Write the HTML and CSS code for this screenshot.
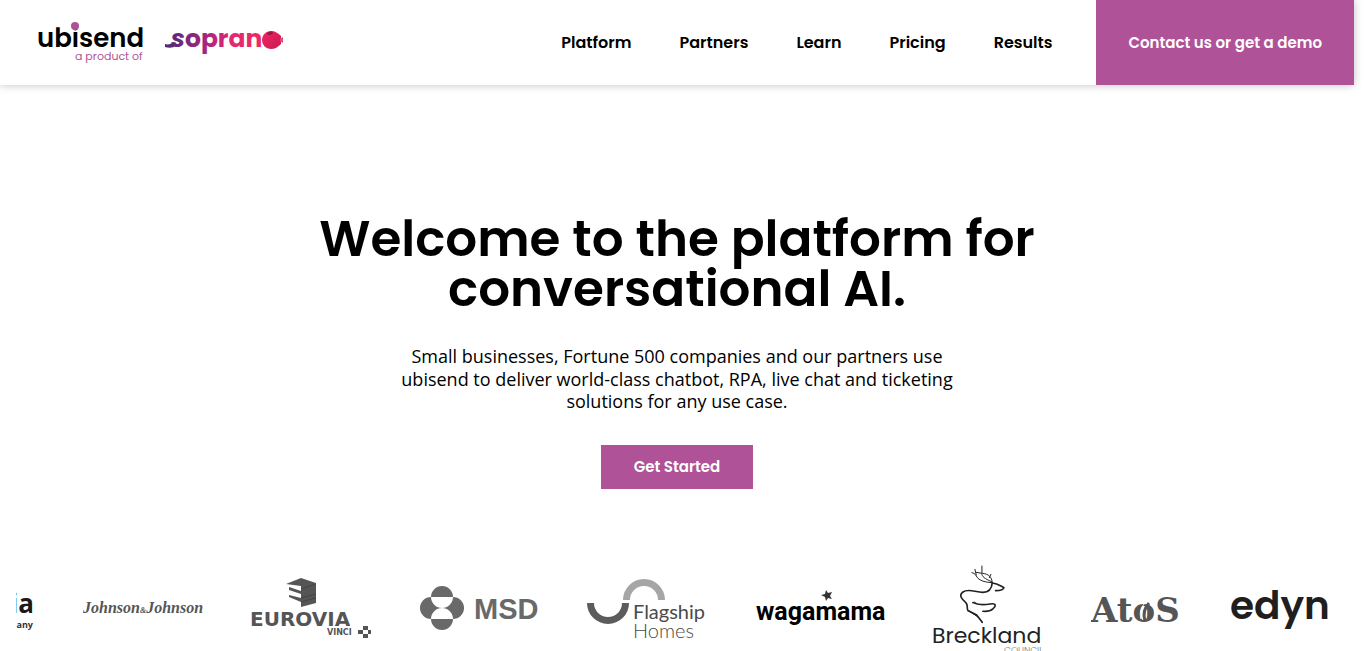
FILE: index.html
```html
<!DOCTYPE html>
<html lang="en">
<head>
<meta charset="UTF-8">
<meta name="viewport" content="width=device-width, initial-scale=1.0">
<title>ubisend</title>
<link rel="stylesheet" href="styles.css">
</head>
<body>

<header class="header">
    <a href="#" class="brand" aria-label="ubisend">
        <svg class="brand-logo" width="250" height="50" viewBox="0 0 250 50">
            <defs>
                <linearGradient id="sopranoFill" gradientUnits="userSpaceOnUse" x1="127" y1="0" x2="240" y2="0">
                    <stop offset="0" stop-color="#4b2a7b"/>
                    <stop offset=".35" stop-color="#a4247f"/>
                    <stop offset=".6" stop-color="#e62872"/>
                    <stop offset="1" stop-color="#ee2a5e"/>
                </linearGradient>
                <linearGradient id="ballFill" x1="0" y1="0" x2="1" y2="1">
                    <stop offset="0" stop-color="#f02563"/>
                    <stop offset="1" stop-color="#c91b50"/>
                </linearGradient>
            </defs>
            <text x="-1" y="29" class="logo-ubisend">ubisend</text>
            <circle cx="37" cy="8" r="4" fill="#b05297"/>
            <text x="37" y="42" class="logo-product">a product of</text>
            <!-- soprano -->
            <path d="M127 26c3 1 6 0 9-2v5c-3 1-6 1-9 0z" fill="url(#sopranoFill)"/>
            <text x="133" y="29" class="logo-soprano"><tspan class="slant">s</tspan>oprano</text>
            <path d="M224 22c0-5 4-9 9-9 4 0 7 2 10 5v8c-3 3-6 5-10 5-5 0-9-4-9-9z" fill="url(#ballFill)"/>
            <path d="M229 15c3-2 5-2 6 0-1 2-3 2-5 2z" fill="#9a1743"/>
            <path d="M242 21l3-2v6l-3-2z" fill="#d9507e"/>
        </svg>
    </a>
    <nav class="nav">
        <a href="#">Platform</a>
        <a href="#">Partners</a>
        <a href="#">Learn</a>
        <a href="#">Pricing</a>
        <a href="#">Results</a>
    </nav>
    <a href="#" class="contact">Contact us or get a demo</a>
</header>

<main>
    <section class="hero">
        <h1>Welcome to the platform for conversational AI.</h1>
        <p>Small businesses, Fortune 500 companies and our partners use ubisend to deliver world-class chatbot, RPA, live chat and ticketing solutions for any use case.</p>
        <a href="#" class="button">Get Started</a>
    </section>

    <section class="logos">
        <svg width="24" height="86" viewBox="0 0 24 86">
            <text x="23" y="48" class="logo-ia">ia</text>
            <text x="22" y="63" class="logo-any">any</text>
        </svg>

        <svg width="120" height="86" viewBox="0 0 120 86">
            <text x="0" y="48" class="logo-johnson">Johnson<tspan class="amp">&amp;</tspan>Johnson</text>
        </svg>

        <!-- Eurovia -->
        <svg width="120" height="86" viewBox="0 0 120 86">
            <g fill="#555">
                <path d="M35 19l15-6 15 5v20l-15 4v-5l-12-5v-2l12 3v-4l-12-4v-3l12 4v-5z"/>
                <path d="M50 24l15-5M50 33l15-4M50 37l15-4" stroke="#444" fill="none"/>
                <path d="M112 61h5v4h-5zM112 69h5v4h-5zM107 65h5v4h-5zM117 65h4v4h-4z"/>
            </g>
            <text x="-1" y="61" class="logo-eurovia">EUROVIA</text>
            <text x="76" y="70" class="logo-vinci">VINCI</text>
        </svg>

        <!-- MSD -->
        <svg width="120" height="86" viewBox="0 0 120 86">
            <g fill="#696969">
                <circle cx="12" cy="43" r="11"/>
                <circle cx="34" cy="43" r="11"/>
                <path d="M12 32a11 11 0 0 1 22 0zM12 54a11 11 0 0 0 22 0z"/>
                <path d="M12 32h22v22H12z"/>
            </g>
            <path d="M12 32a11 11 0 0 0 22 0zM12 54a11 11 0 0 1 22 0z" fill="#fff"/>
            <text x="55" y="54" class="logo-msd">MSD</text>
        </svg>

        <!-- Flagship Homes -->
        <svg width="120" height="86" viewBox="0 0 120 86">
            <path d="M3.500 38a17.500 17.500 0 0 0 35 0" fill="none" stroke="#5c5c5c" stroke-width="7"/>
            <path d="M39.500 35a17.500 17.500 0 0 1 35 0" fill="none" stroke="#a6a6a6" stroke-width="7"/>
            <text x="46" y="54" class="logo-flagship">Flagship</text>
            <text x="46" y="73" class="logo-homes">Homes</text>
        </svg>

        <!-- wagamama -->
        <svg width="130" height="86" viewBox="0 0 130 86">
            <path d="M71 25l2 3 4-1-2 4 2 3-4-1-2 3-1-4-4-2 4-1z" fill="#333"/>
            <text x="1" y="55" class="logo-wagamama">wagamama</text>
        </svg>

        <!-- Breckland Council -->
        <svg width="110" height="86" viewBox="0 0 110 86">
            <g transform="translate(-23 -5) scale(.333)" fill="none" stroke="#222" stroke-linecap="round">
                <path d="M257 92c14 0 24-3 25-9-10-5-18-13-35-14" stroke-width="5"/>
                <path d="M247 69c-2 22-12 28-28 28-25-1-45-12-60-1-14 10-3 22 8 31 9 8 2 16 7 25l26 13 17 22" stroke-width="5"/>
                <path d="M176 152c18 14 35 20 40 35" stroke-width="3"/>
                <path d="M189 128c17 9 35 7 52 4 20-3 17 8 8 15-8 7-19 8-30 7" stroke-width="5"/>
                <path d="M189 128c10-5 5 2 15 4" stroke-width="3"/>
                <path d="M247 68c-20-1-40-5-48-20-4-7-8-9-13-10M245 65c-20-9-30-15-29-25v-22M199 45l-4-17M216 40l-17-3M219 40c18 3 26 10 28 27M238 53l5-10" stroke-width="3"/>
            </g>
            <text x="-1" y="78" class="logo-breckland">Breckland</text>
            <text x="71" y="88" class="logo-council">COUNCIL</text>
        </svg>

        <!-- Atos -->
        <svg width="90" height="86" viewBox="0 0 90 86">
            <text x="0" y="57" class="logo-atos">AtoS</text>
            <path d="M58 38c-5 5-6 11-4 18" fill="none" stroke="#555" stroke-width="3"/>
            <path d="M55 37c-5 5-7 10-5 17" fill="none" stroke="#fff"/>
        </svg>

        <svg width="100" height="86" viewBox="0 0 100 86">
            <text x="1" y="54" class="logo-edyn">edyn</text>
        </svg>
    </section>
</main>

</body>
</html>
```
FILE: styles.css
```css
* {
    box-sizing: border-box;
}
body {
    margin: 0;
    padding-right: 12px; /* room for the scrollbar */
    background-color: #fff;
    color: #000;
    font-family: "Open Sans", sans-serif;
}
a {
    color: inherit;
    text-decoration: none;
}
.header {
    display: flex;
    align-items: stretch;
    height: 85px;
    padding-left: 38px;
    background-color: #fff;
    box-shadow: 0 0 8px rgba(0, 0, 0, 0.25);
    font-family: Poppins, Inter, sans-serif;
    font-weight: 600;
}
.brand {
    display: flex;
    align-items: center;
    margin-right: auto;
}
.brand-logo {
    display: block;
}
.nav {
    display: flex;
    align-items: center;
    gap: 48px;
    margin-right: 44px;
    font-size: 16px;
}
.contact {
    display: flex;
    align-items: center;
    padding: 0 32px;
    background-color: #b05297;
    color: #fff;
    font-size: 15px;
}

/* Hero */
.hero {
    display: flex;
    flex-direction: column;
    align-items: center;
    padding: 129px 16px 76px;
    text-align: center;
}
h1 {
    max-width: 760px;
    margin: 0 0 31px;
    font-family: Poppins, Inter, sans-serif;
    font-size: 50px;
    font-weight: 600;
    line-height: 50px;
}
.hero p {
    max-width: 570px;
    margin: 0 0 32px;
    font-size: 18px;
    line-height: 1.25;
}
.button {
    padding: 0 33px;
    background-color: #b05297;
    color: #fff;
    font-family: Poppins, Inter, sans-serif;
    font-size: 15px;
    font-weight: 600;
    line-height: 44px;
}

/* Customer logos */
.logos {
    display: flex;
    justify-content: flex-end;
    gap: 48px;
    margin: 0 16px;
    padding-right: 9px;
    overflow: hidden;
}
.logos svg {
    flex-shrink: 0;
}
.logo-ubisend {
    font: 600 26px Poppins, sans-serif;
}
.logo-product {
    font: 400 11px Poppins, sans-serif;
    fill: #b05297;
}
.logo-soprano {
    font: 700 25px Poppins, sans-serif;
    fill: url(#sopranoFill);
}
.slant {
    font-style: italic;
}
.logo-ia {
    font: 700 26px "Open Sans", sans-serif;
    text-anchor: end;
    fill: #1a1a1a;
}
.logo-any {
    font: 700 9px "Open Sans", sans-serif;
    text-anchor: end;
    fill: #333;
}
.logo-johnson {
    font: italic 700 16px "Liberation Serif", serif;
    fill: #555;
}
.amp {
    font-size: 8px;
}
.logo-eurovia {
    font: 700 20px "DejaVu Sans", sans-serif;
    fill: #555;
}
.logo-vinci {
    font: 700 8px "DejaVu Sans", sans-serif;
    fill: #555;
}
.logo-msd {
    font: 700 29px "Liberation Sans", sans-serif;
    fill: #696969;
}
.logo-flagship {
    font: 400 20px Lato, sans-serif;
    fill: #4a4a4a;
}
.logo-homes {
    font: 300 20px Lato, sans-serif;
    fill: #4a4a4a;
}
.logo-wagamama {
    font: 700 25px Roboto, sans-serif;
}
.logo-breckland {
    font: 400 22px Poppins, sans-serif;
    fill: #222;
}
.logo-council {
    font: 300 9px Poppins, sans-serif;
    fill: #777;
}
.logo-atos {
    font: 700 34px "DejaVu Serif", serif;
    fill: #555;
}
.logo-edyn {
    font: 600 39px Poppins, sans-serif;
    fill: #1f1f1f;
}
```
